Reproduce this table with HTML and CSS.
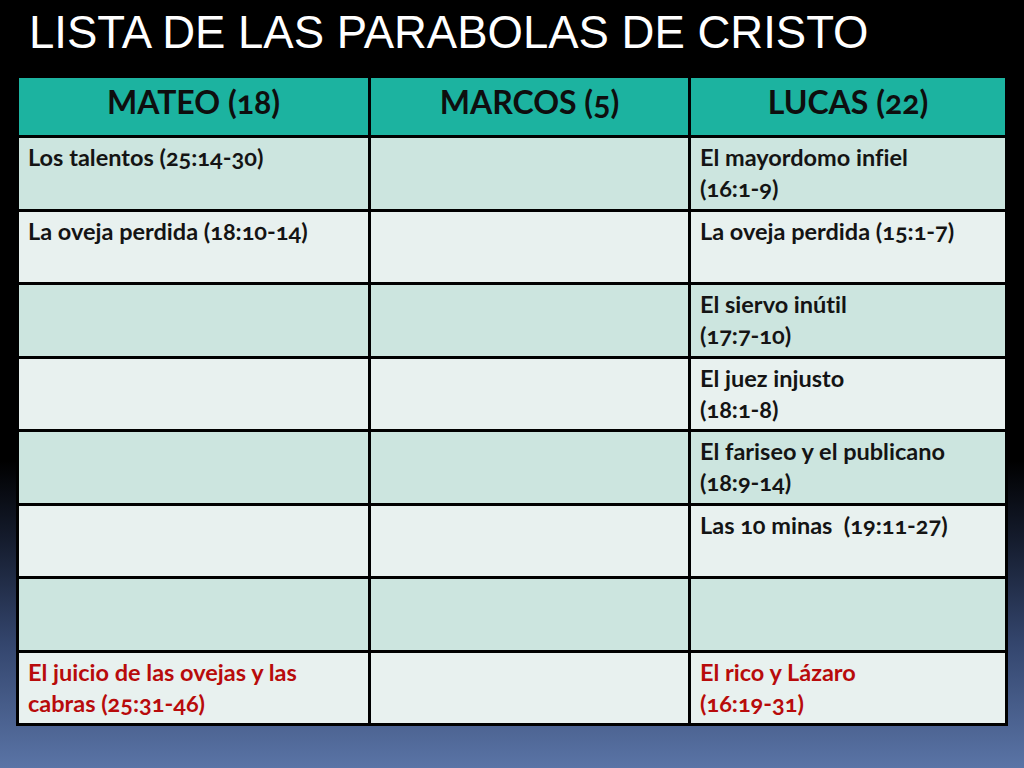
FILE: index.html
```html
<!DOCTYPE html>
<html lang="es">
<head>
<meta charset="utf-8">
<title>Lista de las parábolas de Cristo</title>
<link rel="stylesheet" href="styles.css">
</head>
<body>
<div class="slide">
  <h1 class="title">LISTA DE LAS PARABOLAS DE CRISTO</h1>
  <div class="table">
    <div class="cell head">MATEO (18)</div>
    <div class="cell head">MARCOS (5)</div>
    <div class="cell head">LUCAS (22)</div>

    <div class="cell odd">Los talentos (25:14-30)</div>
    <div class="cell odd"></div>
    <div class="cell odd">El mayordomo infiel<br>(16:1-9)</div>

    <div class="cell even">La oveja perdida (18:10-14)</div>
    <div class="cell even"></div>
    <div class="cell even">La oveja perdida (15:1-7)</div>

    <div class="cell odd"></div>
    <div class="cell odd"></div>
    <div class="cell odd">El siervo inútil<br>(17:7-10)</div>

    <div class="cell even"></div>
    <div class="cell even"></div>
    <div class="cell even">El juez injusto<br>(18:1-8)</div>

    <div class="cell odd"></div>
    <div class="cell odd"></div>
    <div class="cell odd">El fariseo y el publicano<br>(18:9-14)</div>

    <div class="cell even"></div>
    <div class="cell even"></div>
    <div class="cell even">Las 10 minas&nbsp; (19:11-27)</div>

    <div class="cell odd"></div>
    <div class="cell odd"></div>
    <div class="cell odd"></div>

    <div class="cell even red">El juicio de las ovejas y las cabras (25:31-46)</div>
    <div class="cell even"></div>
    <div class="cell even red">El rico y Lázaro<br>(16:19-31)</div>
  </div>
</div>
</body>
</html>
```

FILE: styles.css
```css
html, body {
  margin: 0;
  padding: 0;
}
body {
  width: 1024px;
  height: 768px;
  overflow: hidden;
  background: linear-gradient(to bottom, #000 0%, #000 60%, #141b2c 70%, #34466e 84%, #5a74a6 100%);
}
.slide {
  display: flex;
  flex-direction: column;
  padding: 0 16px;
}
.title {
  margin: 0;
  padding: 7px 0 0 13px;
  height: 68px;
  box-sizing: border-box;
  font-family: "Liberation Sans", Arial, sans-serif;
  font-weight: normal;
  font-size: 45.5px;
  line-height: 52px;
  color: #fff;
  white-space: nowrap;
}
.table {
  display: grid;
  grid-template-columns: 349px 317px 314px;
  grid-template-rows: 57px repeat(8, 70.5px);
  gap: 3px;
  padding: 3px;
  width: 992px;
  box-sizing: border-box;
  margin-top: 7px;
  background: #000;
  font-family: Lato, "Open Sans", sans-serif;
  font-weight: bold;
  font-variant-numeric: oldstyle-nums;
  font-variant-ligatures: none;
}
.cell {
  box-sizing: border-box;
  padding: 4px 8px 0 9px;
  font-size: 23.5px;
  line-height: 31px;
  color: #141414;
}
.head {
  background: #1cb3a0;
  font-size: 32px;
  text-align: center;
  padding: 4px 0 0 0;
  line-height: 40px;
  color: #0e0e0e;
}
.odd {
  background: #cce5df;
}
.even {
  background: #e8f1ef;
}
.red {
  color: #b80b0b;
}
```
